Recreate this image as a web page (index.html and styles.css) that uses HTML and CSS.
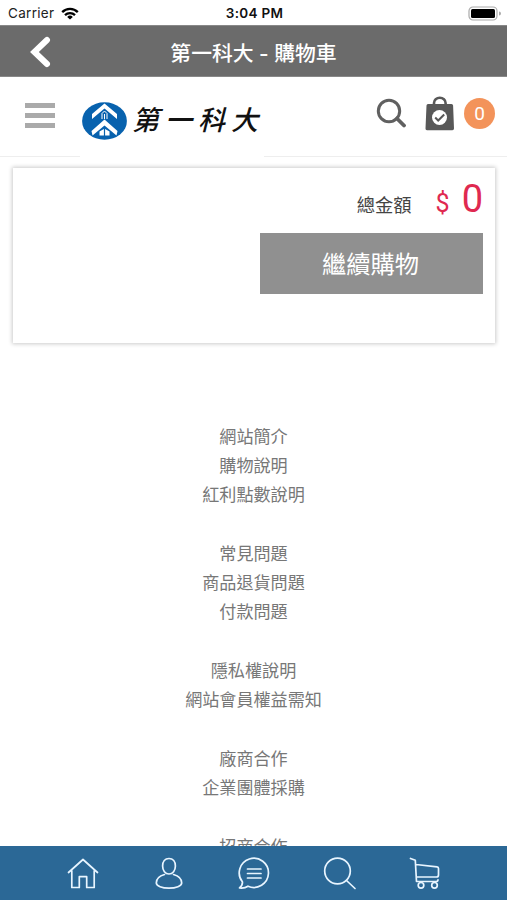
FILE: index.html
```html
<!DOCTYPE html>
<html lang="zh-Hant">
<head>
  <meta charset="UTF-8">
  <meta name="viewport" content="width=device-width, initial-scale=1.0">
  <title>第一科大 - 購物車</title>
  <link rel="stylesheet" href="styles.css">
</head>
<body>
  <div class="app">
    <div class="status-bar">
      <div class="carrier">
        <span>Carrier</span>
        <svg width="18" height="13" viewBox="0 0 18 13" fill="none" stroke="#000" stroke-width="2.3">
          <path d="M1.2 5.1a11 11 0 0 1 15.6 0"/>
          <path d="M4 8.1a7.1 7.1 0 0 1 10 0"/>
          <path d="M9 12.5L6.2 9.9a4 4 0 0 1 5.6 0z" fill="#000" stroke="none"/>
        </svg>
      </div>
      <span class="time">3:04 PM</span>
      <svg class="battery" width="33" height="15" viewBox="0 0 33 15">
        <rect x="1" y="1" width="28" height="13" rx="4" fill="#fff" stroke="#aaa" stroke-width="1.2"/>
        <rect x="3" y="3" width="24" height="9" rx="1.5" fill="#000"/>
        <path d="M31 5.5v4a2 2 0 0 0 0-4z" fill="#aaa"/>
      </svg>
    </div>

    <header class="title-bar">
      <svg class="back" width="22" height="32" viewBox="0 0 22 32" fill="none" stroke="#fff" stroke-width="6" stroke-linecap="round" stroke-linejoin="miter">
        <path d="M18 4L5.4 16L18 28"/>
      </svg>
      <h1>第一科大 - 購物車</h1>
    </header>

    <nav class="shop-nav">
      <div class="menu">
        <span></span>
        <span></span>
        <span></span>
      </div>
      <div class="logo">
        <svg width="45" height="38" viewBox="0 0 45 38">
          <ellipse cx="22.5" cy="19" rx="22.4" ry="18.7" fill="#0862ae"/>
          <path d="M22.5 1.5L35 12v5L22.5 6.500L10 17v-5z" fill="#fff"/>
          <path d="M20 17v-5.500l2.500-2.500 2.500 2.500V17M22.500 12v5" fill="none" stroke="#fff" stroke-width="1"/>
          <path d="M22.500 17.500L35.500 29l-1 4.500L22.500 23.500l-12 10-1-4.500z" fill="#fff"/>
          <path d="M17.500 33.500v-4l4.400-2.500v6.500zM23.100 33.500V27l4.400 2.500v4z" fill="#fff"/>
        </svg>
        <span class="brand">第一科大</span>
      </div>
      <div class="tools">
        <svg width="30" height="31" viewBox="0 0 30 31" fill="none" stroke="#606060">
          <circle cx="13" cy="13" r="10.700" stroke-width="3"/>
          <path d="M21 20.500l7 7" stroke-width="3.800" stroke-linecap="round"/>
        </svg>
        <svg class="bag" width="30" height="36" viewBox="0 0 30 36">
          <path d="M9 9V7a5.800 5.300 0 0 1 11.600 0v2" fill="none" stroke="#585858" stroke-width="2.600"/>
          <path d="M3 8h23.500q1.500 0 1.600 1.500l.9 23q0 1.700-1.600 1.700H2q-1.600 0-1.500-1.700l1-23Q1.600 8 3 8z" fill="#585858"/>
          <circle cx="14.500" cy="21.500" r="7.500" fill="#fff"/>
          <path d="M10.200 21.500l3 3 6-6" fill="none" stroke="#585858" stroke-width="2"/>
        </svg>
        <span class="count">0</span>
      </div>
    </nav>

    <main class="cart">
      <div class="total">
        <span class="label">總金額</span>
        <span class="currency">$</span>
        <span class="amount">0</span>
      </div>
      <button class="continue">繼續購物</button>
    </main>

    <footer class="links">
      <ul>
        <li>網站簡介</li>
        <li>購物說明</li>
        <li>紅利點數說明</li>
      </ul>
      <ul>
        <li>常見問題</li>
        <li>商品退貨問題</li>
        <li>付款問題</li>
      </ul>
      <ul>
        <li>隱私權說明</li>
        <li>網站會員權益需知</li>
      </ul>
      <ul>
        <li>廠商合作</li>
        <li>企業團體採購</li>
      </ul>
      <ul>
        <li>招商合作</li>
      </ul>
    </footer>

    <nav class="tab-bar">
      <!-- home -->
      <svg viewBox="0 0 34 34">
        <path d="M2.500 16.500L17 3.500l14.500 13M5.800 14.500v17h7.500V20.700h7.400v10.800h7.500v-17"/>
      </svg>
      <!-- member -->
      <svg viewBox="0 0 34 34">
        <path d="M17 2.500c-4 0-6.400 3.200-6.400 7.600S13.200 18 17 18s6.400-3.500 6.400-7.900S21 2.500 17 2.500zM12.500 18.500C7 20 4.300 22.500 4.300 27c0 3 5.700 5.200 12.700 5.200S29.700 30 29.700 27c0-4.500-2.700-7-8.200-8.500"/>
      </svg>
      <!-- messages -->
      <svg viewBox="0 0 34 34">
        <path d="M5.500 26A14.600 14.600 0 1 1 11 30.200C8 32.300 5 32.300 2.500 32c2-1.500 3-3.500 3-6zM10.500 13h13.500M10.500 17.500h13.500M10.500 22h13.500"/>
      </svg>
      <!-- search -->
      <svg viewBox="0 0 34 34">
        <circle cx="14.500" cy="15" r="12.800"/>
        <path d="M23.500 24.500l8.500 8"/>
      </svg>
      <!-- cart -->
      <svg viewBox="0 0 34 34">
        <path d="M2.500 2.500l4.800 1.800L8.500 25.500h19.500q2 0 2-1.700M8.300 21h20.200q2 0 2-2v-6.500q0-1.500-1.500-1.700L8 8.500"/>
        <circle cx="13" cy="29.300" r="2.800"/>
        <circle cx="26.500" cy="29.300" r="2.800"/>
      </svg>
    </nav>
  </div>
</body>
</html>
```
FILE: styles.css
```css
* {
  box-sizing: border-box;
}

body {
  margin: 0;
  font-family: "Liberation Sans", "Noto Sans CJK TC", sans-serif;
  background: #fff;
}

svg {
  display: block;
  flex: none;
}

.app {
  display: flex;
  flex-direction: column;
  height: 900px;
  overflow: hidden;
}

/* Status bar */
.status-bar {
  display: grid;
  grid-template-columns: 1fr auto 1fr;
  align-items: center;
  flex: none;
  height: 25px;
  padding: 1px 6px 0 8px;
  font-family: Inter, sans-serif;
  font-size: 13.5px;
  letter-spacing: 0.3px;
  color: #222;
}

.carrier {
  display: flex;
  align-items: center;
  gap: 7px;
}

.time {
  font-weight: 600;
  color: #111;
}

.battery {
  justify-self: end;
}

/* Title bar */
.title-bar {
  display: grid;
  grid-template-columns: 60px 1fr 60px;
  align-items: center;
  flex: none;
  height: 52px;
  background: #6b6b6b;
  border-top: 1px solid #888;
  border-bottom: 1px solid #888;
  color: #fff;
}

.back {
  margin: 1px 0 0 29px;
}

.title-bar h1 {
  margin: 0;
  padding-top: 5px;
  font-family: Inter, "Noto Sans CJK TC", sans-serif;
  font-size: 20.8px;
  font-weight: 500;
  line-height: 45px;
  text-align: center;
  white-space: nowrap;
}

/* Shop navigation */
.shop-nav {
  display: flex;
  flex: none;
  height: 80px;
  padding: 0 12px 0 25px;
  border-bottom: 1px solid #eee;
}

.menu {
  display: flex;
  flex-direction: column;
  gap: 5px;
  width: 30px;
  margin-top: 26px;
}

.menu span {
  height: 5px;
  background: #aaa;
}

.logo {
  display: flex;
  align-items: flex-start;
  width: 184px;
  height: 80px;
  margin-left: 25px;
  padding: 25px 0 0 2px;
  background: #fff;
}

.brand {
  margin-left: 5px;
  font-size: 27px;
  font-weight: 500;
  font-style: italic;
  line-height: 39px;
  letter-spacing: 6px;
  white-space: nowrap;
  color: #111;
}

.tools {
  display: flex;
  align-items: flex-start;
  margin-left: auto;
  padding-top: 21px;
}

.bag {
  margin: -2px 9px 0 19px;
}

.count {
  width: 31px;
  height: 31px;
  border-radius: 50%;
  background: #f3935a;
  color: #fff;
  font-family: Roboto, sans-serif;
  font-size: 19px;
  line-height: 31px;
  text-align: center;
}

/* Cart summary */
.cart {
  flex: none;
  height: 175px;
  margin: 11px 12px 0 13px;
  padding: 10px 12px;
  box-shadow: 0 0 4px 1px #ccc;
}

.total {
  display: flex;
  justify-content: flex-end;
  align-items: baseline;
  height: 55px;
  padding-top: 1px;
  line-height: 40px;
}

.label {
  font-size: 18.3px;
  color: #444;
}

.currency {
  margin-left: 24px;
  font-family: Roboto, sans-serif;
  font-size: 25px;
  color: #df2950;
}

.amount {
  margin: 0 0 0 12px;
  font-family: Roboto, sans-serif;
  font-size: 38px;
  color: #df2950;
}

.continue {
  display: block;
  width: 223px;
  height: 61px;
  margin-left: auto;
  padding: 0 2px 2px 0;
  border: none;
  background: #909090;
  color: #fff;
  font-family: inherit;
  font-size: 24.3px;
}

/* Footer links */
.links {
  flex: 1;
  min-height: 0;
  padding-top: 79.5px;
  overflow: hidden;
  font-size: 17.1px;
  line-height: 29.3px;
  text-align: center;
  color: #777;
}

.links ul {
  list-style: none;
  margin: 0 0 29.3px;
  padding: 0;
}

/* Bottom tabs */
.tab-bar {
  display: flex;
  justify-content: space-between;
  flex: none;
  height: 54px;
  padding: 10px 65px 0 66px;
  background: #2b6896;
}

.tab-bar svg {
  width: 34px;
  height: 34px;
  fill: none;
  stroke: #e8f5ff;
  stroke-width: 1.7;
  stroke-linecap: round;
  stroke-linejoin: round;
}
```
